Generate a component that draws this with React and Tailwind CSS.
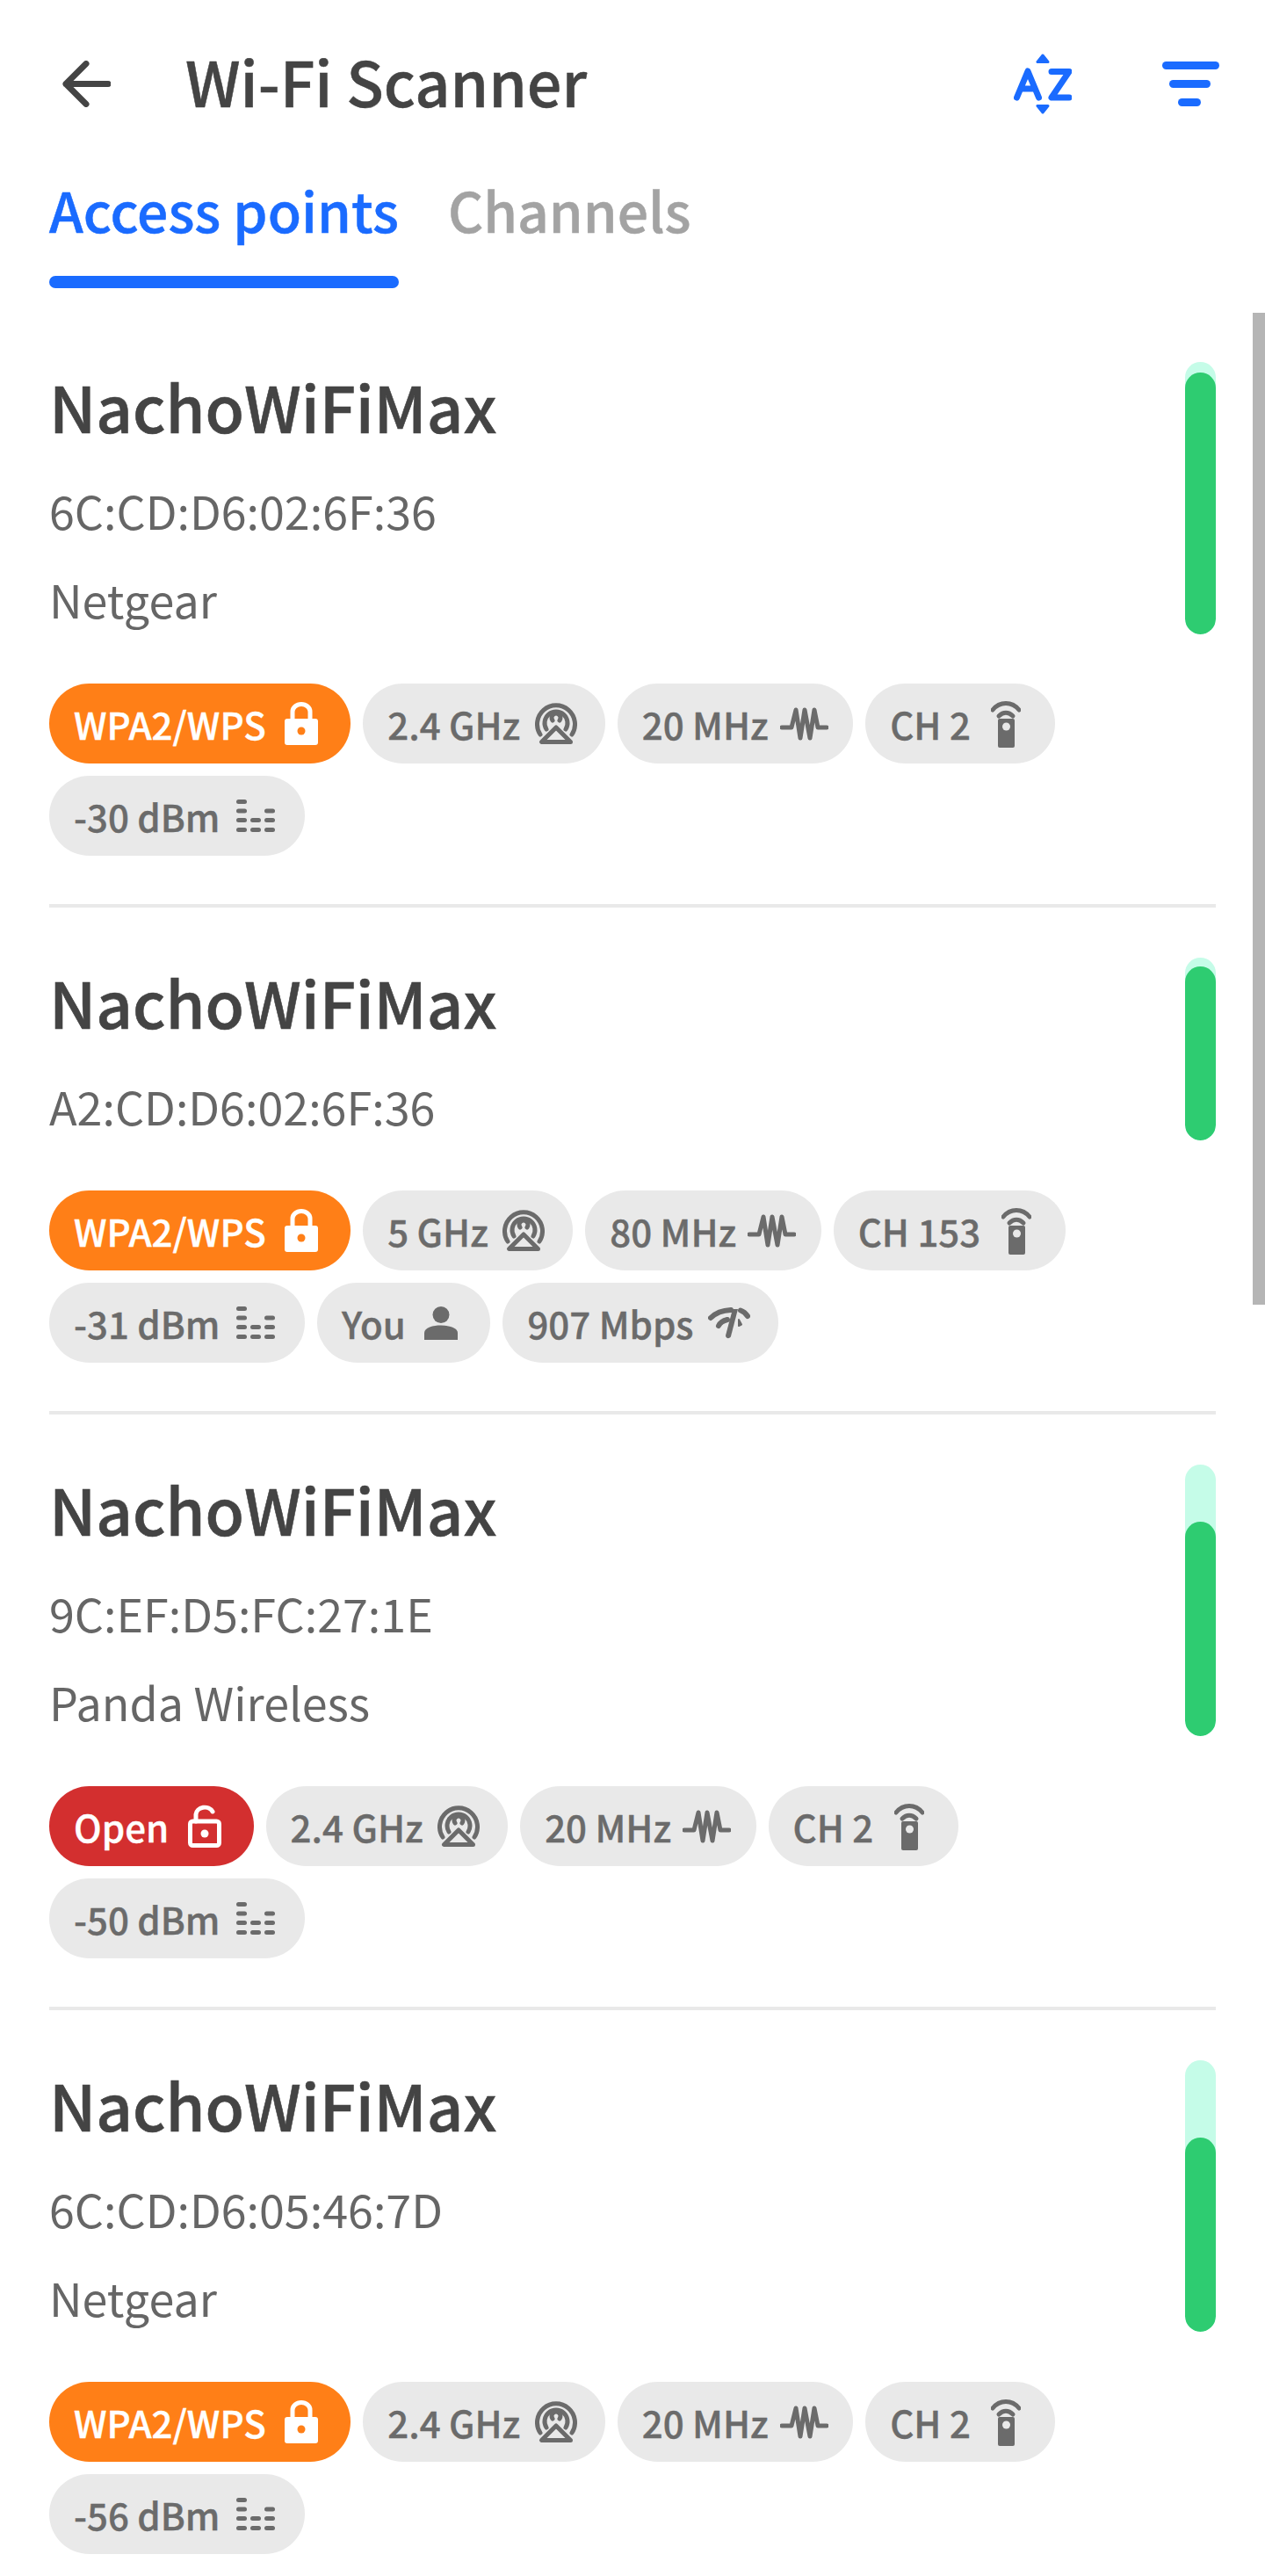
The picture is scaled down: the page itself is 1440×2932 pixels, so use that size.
import React from "react";

const Lock = () => (
  <svg width="38" height="49" viewBox="0 0 38 49">
    <path d="M9 22V11a10 8.500 0 0 1 20 0v11" fill="none" stroke="#fff" strokeWidth="5" />
    <rect x="0" y="19" width="38" height="30" rx="3" fill="#fff" />
    <circle cx="19" cy="33" r="4.500" fill="#ff7f17" />
  </svg>
);

const OpenLock = () => (
  <svg width="38" height="49" viewBox="0 0 38 49">
    <path d="M9 19V11a10 8.500 0 0 1 19-3" fill="none" stroke="#fff" strokeWidth="5" strokeLinecap="round" />
    <rect x="2.500" y="19" width="33" height="27.500" rx="3" fill="none" stroke="#fff" strokeWidth="5" />
    <circle cx="19" cy="33" r="4.500" fill="#fff" />
  </svg>
);

const Antenna = () => (
  <svg width="48" height="47" viewBox="0 0 48 47" fill="none" stroke="#6b6b6b" strokeWidth="5" strokeLinecap="round" strokeLinejoin="round">
    <path d="M6 36a21.500 21.500 0 1 1 36 0" />
    <path d="M13 30a13 13 0 1 1 22 0" />
    <path d="M20 20a5 5 0 1 1 8 0" />
    <path d="M24 28 7.500 44.500h33z" />
  </svg>
);

const Wave = () => (
  <svg width="55" height="38" viewBox="0 0 55 38" fill="none" stroke="#6b6b6b" strokeWidth="5" strokeLinecap="round" strokeLinejoin="round">
    <path d="M2 23H13L18 3L23 35L28 3L34 35L39 3L43 23H53" />
  </svg>
);

const Remote = () => (
  <svg width="34" height="54" viewBox="0 0 34 54">
    <path d="M2 11C10 1 24 1 32 11" fill="none" stroke="#6b6b6b" strokeWidth="5" strokeLinecap="round" />
    <path d="M9 18C14 13 20 13 25 18" fill="none" stroke="#6b6b6b" strokeWidth="5" strokeLinecap="round" />
    <rect x="8" y="21" width="19" height="33" rx="2" fill="#6b6b6b" />
    <circle cx="17.500" cy="30" r="4.500" fill="#e9e9e9" />
  </svg>
);

const Levels = () => (
  <svg width="44" height="37" viewBox="0 0 44 37" fill="#6b6b6b">
    <rect x="0" y="0" width="12" height="5" rx="2.500" />
    <rect x="0" y="10.500" width="12" height="5" rx="2.500" />
    <rect x="32" y="10.500" width="12" height="5" rx="2.500" />
    <rect x="0" y="21" width="12" height="5" rx="2.500" />
    <rect x="16" y="21" width="12" height="5" rx="2.500" />
    <rect x="32" y="21" width="12" height="5" rx="2.500" />
    <rect x="0" y="32" width="12" height="5" rx="2.500" />
    <rect x="16" y="32" width="12" height="5" rx="2.500" />
    <rect x="32" y="32" width="12" height="5" rx="2.500" />
  </svg>
);

const Person = () => (
  <svg width="38" height="38" viewBox="0 0 38 38" fill="#6b6b6b">
    <circle cx="19" cy="9.500" r="9.500" />
    <path d="M0 38V30C0 24 10 21.500 19 21.500S38 24 38 30V38Z" />
  </svg>
);

const Speed = () => (
  <svg width="48" height="36" viewBox="0 0 48 36">
    <path d="M3 12C9 6 16 3.500 26 3" fill="none" stroke="#6b6b6b" strokeWidth="6" strokeLinecap="round" />
    <path d="M37 3.500C40 4.500 43 7 45 10" fill="none" stroke="#6b6b6b" strokeWidth="6" strokeLinecap="round" />
    <path d="M12 21C14 17 18 15 22 14" fill="none" stroke="#6b6b6b" strokeWidth="6" strokeLinecap="round" />
    <path d="M35 14L38 19.500L35 21Z" fill="#6b6b6b" stroke="#6b6b6b" strokeWidth="2" strokeLinejoin="round" />
    <path d="M28 2L34 2L26 33C25 36 20 36 20 32Z" fill="#6b6b6b" />
  </svg>
);

const icons = { antenna: Antenna, wave: Wave, remote: Remote, levels: Levels, person: Person, speed: Speed };

// every chip icon sits centred in a 56px box, so the narrow ones get more air
const Chip = ({ label, icon }) => {
  const Icon = icons[icon];
  return (
    <div className="flex h-[91px] items-center gap-[12.5px] rounded-full bg-[#e9e9e9] px-[28px] text-[42px] font-medium text-[#6b6b6b] [-webkit-text-stroke:0.4px]">
      <span>{label}</span>
      <div className="flex h-[56px] w-[56px] items-center justify-center">
        <Icon />
      </div>
    </div>
  );
};

const SecurityChip = ({ open }) => (
  <div className={`flex h-[91px] items-center gap-[12.5px] rounded-full px-[28px] text-[42px] font-medium text-white [-webkit-text-stroke:0.4px] ${open ? "bg-[#d32f2f]" : "bg-[#ff7f17]"}`}>
    <span>{open ? "Open" : "WPA2/WPS"}</span>
    <div className="flex h-[56px] w-[56px] items-center justify-center">
      {open ? <OpenLock /> : <Lock />}
    </div>
  </div>
);

const networks = [
  {
    mac: "6C:CD:D6:02:6F:36",
    vendor: "Netgear",
    fillHeight: "h-[298px]",
    barHeight: "h-[310px]",
    chips: [
      ["2.4 GHz", "antenna"],
      ["20 MHz", "wave"],
      ["CH 2", "remote"],
      ["-30 dBm", "levels"],
    ],
  },
  {
    mac: "A2:CD:D6:02:6F:36",
    fillHeight: "h-[198px]",
    barHeight: "h-[208px]",
    chips: [
      ["5 GHz", "antenna"],
      ["80 MHz", "wave"],
      ["CH 153", "remote"],
      ["-31 dBm", "levels"],
      ["You", "person"],
      ["907 Mbps", "speed"],
    ],
  },
  {
    mac: "9C:EF:D5:FC:27:1E",
    vendor: "Panda Wireless",
    open: true,
    fillHeight: "h-[244px]",
    barHeight: "h-[309px]",
    chips: [
      ["2.4 GHz", "antenna"],
      ["20 MHz", "wave"],
      ["CH 2", "remote"],
      ["-50 dBm", "levels"],
    ],
  },
  {
    mac: "6C:CD:D6:05:46:7D",
    vendor: "Netgear",
    fillHeight: "h-[221px]",
    barHeight: "h-[309px]",
    chips: [
      ["2.4 GHz", "antenna"],
      ["20 MHz", "wave"],
      ["CH 2", "remote"],
      ["-56 dBm", "levels"],
    ],
  },
];

const Network = ({ network }) => (
  <div className="border-b-4 border-[#e9e9e9] pb-[55px] pt-[57px] first:pt-0 last:border-b-0">
    <div className="flex items-start justify-between">
      <div>
        <div className="h-[108px] text-[72.5px] font-medium leading-[100px] text-[#444444] [-webkit-text-stroke:0.6px]">NachoWiFiMax</div>
        <div className="mt-[23px] h-[84px] text-[52px] leading-[76px] text-[#666666]">{network.mac}</div>
        {network.vendor && (
          <div className="mt-[17px] h-[84px] text-[52px] leading-[76px] text-[#666666]">{network.vendor}</div>
        )}
      </div>
      <div className={`relative w-[35px] overflow-hidden rounded-full bg-[#c5fce8] ${network.barHeight}`}>
        <div className={`absolute bottom-0 left-0 w-full rounded-full bg-[#2ecc71] ${network.fillHeight}`} />
      </div>
    </div>
    <div className="mt-[50px] flex flex-wrap gap-[14px]">
      <SecurityChip open={network.open} />
      {network.chips.map(([label, icon]) => (
        <Chip key={label} label={label} icon={icon} />
      ))}
    </div>
  </div>
);

export default function App() {
  return (
    <div
      className="relative h-[2932px] w-[1440px] overflow-hidden bg-white"
      style={{ fontFamily: '"Noto Sans CJK SC", "Noto Sans", sans-serif' }}
    >
      <header className="flex h-[190px] items-center pl-[71px] pr-[52px]">
        <svg width="55" height="53" viewBox="0 0 55 53" fill="none" stroke="#444444" strokeWidth="7" strokeLinecap="round" strokeLinejoin="round">
          <path d="M52 26.500H4M27 3.500 4 26.500l23 23" />
        </svg>
        <h1 className="ml-[85px] pb-[7px] text-[70px] font-medium text-[#444444] [-webkit-text-stroke:0.5px]">Wi-Fi Scanner</h1>
        <div className="ml-auto flex items-center gap-[103px]">
          <svg width="66" height="69" viewBox="0 0 66 69" className="text-[#1a6bff]" fill="none" stroke="currentColor" strokeLinecap="round" strokeLinejoin="round">
            <path d="M33 2 27 9.500H39Z" fill="currentColor" strokeWidth="3" />
            <path d="M33 67 27 59.500H39Z" fill="currentColor" strokeWidth="3" />
            <path d="M3.500 50 16 20 28.500 50M8 40H24" strokeWidth="7" />
            <path d="M43 20.500H63L43 50H63" strokeWidth="7" />
          </svg>
          <svg width="65" height="51" viewBox="0 0 65 51" fill="#1a6bff">
            <rect x="0" y="0" width="65" height="9" rx="4.500" />
            <rect x="8" y="21" width="47" height="9" rx="4.500" />
            <rect x="18" y="42" width="26" height="9" rx="4.500" />
          </svg>
        </div>
      </header>

      <div className="flex gap-[56px] px-[56px]">
        <div className="flex h-[138px] flex-col justify-between">
          <span className="text-[62.4px] font-medium leading-[96px] text-[#1a6bff] [-webkit-text-stroke:0.5px]">Access points</span>
          <div className="h-[14px] rounded-full bg-[#1a6bff]" />
        </div>
        <span className="text-[62.4px] font-medium leading-[96px] text-[#a3a3a3] [-webkit-text-stroke:0.5px]">Channels</span>
      </div>

      <main className="px-[56px] pt-[84px]">
        {networks.map((network) => (
          <Network key={network.mac} network={network} />
        ))}
      </main>

      <div className="absolute right-0 top-[356px] h-[1129px] w-[14px] bg-[#b5b5b5]" />
    </div>
  );
}
